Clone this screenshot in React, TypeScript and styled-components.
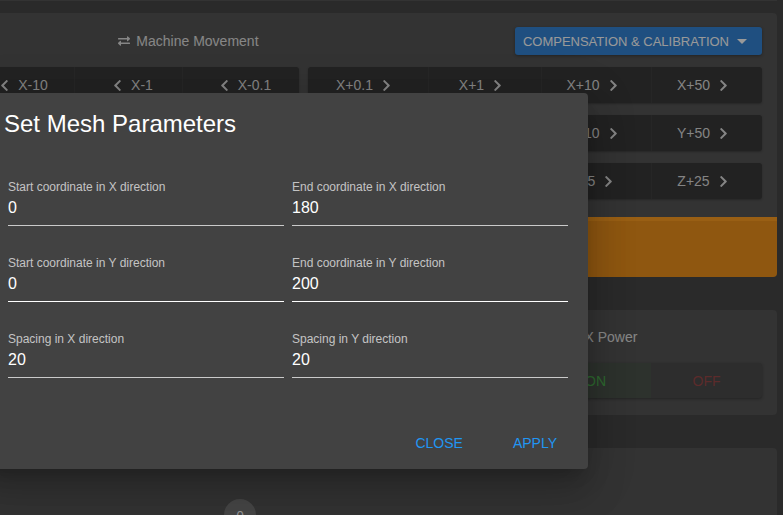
import React from "react";
import styled, { createGlobalStyle } from "styled-components";
import { FaChevronLeft, FaChevronRight, FaExchangeAlt } from "react-icons/fa";

const GlobalStyle = createGlobalStyle`
  html, body {
    margin: 0;
    padding: 0;
    background: #464646;
    overflow: hidden;
  }
  body {
    font-family: "Liberation Sans", Arial, sans-serif;
  }
  * {
    box-sizing: border-box;
  }
`;

const Viewport = styled.div`
  position: relative;
  width: 783px;
  height: 515px;
  overflow: hidden;
  background: #464646;
`;

const Page = styled.div`
  margin-left: -170px;
  width: 947px;
  display: flex;
  flex-direction: column;
  gap: 33px;
  border-top: 1px solid #555;
  padding-top: 12px;
`;

const Panel = styled.div`
  background: #555;
  border-radius: 4px;
  display: flex;
  flex-direction: column;
`;

const PanelBody = styled.div`
  display: flex;
  flex-direction: column;
  gap: 12px;
  padding: 14px 15px 18px;
`;

const Header = styled.div`
  display: flex;
  align-items: center;
  height: 28px;
`;

const HeaderTitle = styled.div`
  flex: 1;
  display: flex;
  align-items: center;
  justify-content: center;
  gap: 6px;
  padding-left: 17px;
  color: #e0e0e0;
  font-size: 14px;
`;

const DropdownButton = styled.button`
  height: 28px;
  display: flex;
  align-items: center;
  gap: 8px;
  padding: 0 15px 0 8px;
  border: none;
  border-radius: 3px;
  background: #3484d5;
  color: #fff;
  font-family: inherit;
  font-size: 13px;
  text-transform: uppercase;
  box-shadow: 0 1px 3px rgba(0, 0, 0, 0.3);
`;

const Caret = styled.span`
  width: 0;
  height: 0;
  border-left: 5px solid transparent;
  border-right: 5px solid transparent;
  border-top: 5px solid currentColor;
`;

const JogRow = styled.div`
  display: grid;
  grid-template-columns: 1fr 1fr;
  gap: 9px;
  height: 36px;
`;

const JogGroup = styled.div<{ $cols: string }>`
  display: grid;
  grid-template-columns: ${({ $cols }) => $cols};
  background: #393939;
  border-radius: 3px;
  overflow: hidden;
  box-shadow: 0 1px 2px rgba(0, 0, 0, 0.25);
`;

const JogButton = styled.button<{ $dir: "left" | "right" }>`
  display: flex;
  align-items: center;
  justify-content: center;
  gap: 7px;
  border: none;
  border-left: 1px solid rgba(255, 255, 255, 0.04);
  background: transparent;
  color: #dcdcdc;
  font-family: inherit;
  font-size: 14px;
  padding: ${({ $dir }) => ($dir === "left" ? "0 0 0 7px" : "0 7px 0 0")};

  &:first-child {
    border-left: none;
  }

  svg {
    flex-shrink: 0;
  }
`;

const OrangeBar = styled.div`
  height: 60px;
  background: #ee911c;
  border-top: 4px solid #ff9e22;
  border-radius: 0 0 4px 4px;
`;

const PowerCard = styled.div`
  background: #555;
  border-radius: 4px;
  padding: 17px 15px;
  display: grid;
  grid-template-columns: 1fr 222px;
  gap: 24px;
`;

const PowerBlock = styled.div`
  display: flex;
  flex-direction: column;
  gap: 16px;
`;

const PowerTitle = styled.div`
  padding-left: 25px;
  color: #e0e0e0;
  font-size: 14px;
  line-height: 20px;
`;

const Toggle = styled.div`
  display: grid;
  grid-template-columns: 1fr 1fr;
  height: 35px;
  background: #4b4b4b;
  border-radius: 3px;
  overflow: hidden;
  box-shadow: 0 1px 3px rgba(0, 0, 0, 0.3);
`;

const ToggleOption = styled.div<{ $kind: "on" | "off" }>`
  display: flex;
  align-items: center;
  justify-content: center;
  font-size: 14px;
  color: ${({ $kind }) => ($kind === "on" ? "#4caf50" : "#994949")};
  background: ${({ $kind }) =>
    $kind === "on" ? "rgba(76, 175, 80, 0.09)" : "transparent"};
`;

const BottomCard = styled.div`
  background: #555;
  border-radius: 4px 4px 0 0;
  min-height: 120px;
  padding: 51px 15px 0;
`;

const CountBadge = styled.div`
  width: 32px;
  height: 32px;
  margin-left: 379px;
  border-radius: 50%;
  background: #767676;
  color: #fff;
  font-size: 13px;
  display: flex;
  align-items: center;
  justify-content: center;
`;

const Scrim = styled.div`
  position: absolute;
  inset: 0;
  background: rgba(0, 0, 0, 0.4);
`;

const Dialog = styled.div`
  position: absolute;
  top: 93px;
  left: -20px;
  width: 608px;
  background: #424242;
  border-radius: 4px;
  color: #fff;
  box-shadow: 0 11px 15px -7px rgba(0, 0, 0, 0.2),
    0 24px 38px 3px rgba(0, 0, 0, 0.14), 0 9px 46px 8px rgba(0, 0, 0, 0.12);
`;

const DialogTitle = styled.h2`
  margin: 0;
  padding: 15px 24px 0;
  font-size: 24px;
  line-height: 32px;
  font-weight: 400;
`;

const DialogContent = styled.div`
  display: grid;
  grid-template-columns: 1fr 1fr;
  column-gap: 8px;
  row-gap: 29px;
  padding: 39px 20px 0 28px;
`;

const Field = styled.label`
  display: flex;
  flex-direction: column;
`;

const FieldLabel = styled.span`
  font-size: 12px;
  line-height: 16px;
  color: rgba(255, 255, 255, 0.7);
`;

const FieldInput = styled.input<{ $bright?: boolean }>`
  margin-top: 1px;
  width: 100%;
  height: 30px;
  padding: 0 0 5px;
  border: none;
  border-bottom: 1px solid
    ${({ $bright }) => ($bright ? "#fff" : "rgba(255, 255, 255, 0.72)")};
  background: transparent;
  color: #fff;
  font-family: inherit;
  font-size: 16px;
  line-height: 24px;
  outline: none;
`;

const DialogActions = styled.div`
  display: flex;
  justify-content: flex-end;
  gap: 18px;
  padding: 47px 15px 8px;
`;

const ActionButton = styled.button`
  padding: 6px 16px;
  border: none;
  background: transparent;
  color: #2196f3;
  font-family: inherit;
  font-size: 14px;
  line-height: 24px;
  text-transform: uppercase;
`;

const jogRows = [
  {
    left: ["X-50", "X-10", "X-1", "X-0.1"],
    right: ["X+0.1", "X+1", "X+10", "X+50"],
  },
  {
    left: ["Y-50", "Y-10", "Y-1", "Y-0.1"],
    right: ["Y+0.1", "Y+1", "Y+10", "Y+50"],
  },
  {
    left: ["Z-25", "Z-5", "Z-1", "Z-0.1"],
    right: ["Z+0.1", "Z+1", "Z+5", "Z+25"],
  },
];

const fields = [
  { label: "Start coordinate in X direction", value: "0" },
  { label: "End coordinate in X direction", value: "180" },
  { label: "Start coordinate in Y direction", value: "0", bright: true },
  { label: "End coordinate in Y direction", value: "200", bright: true },
  { label: "Spacing in X direction", value: "20" },
  { label: "Spacing in Y direction", value: "20" },
];

export default function App() {
  return (
    <Viewport>
      <GlobalStyle />
      <Page>
        <Panel>
          <PanelBody>
            <Header>
              <HeaderTitle>
                <FaExchangeAlt size={12} />
                Machine Movement
              </HeaderTitle>
              <DropdownButton>
                Compensation &amp; Calibration
                <Caret />
              </DropdownButton>
            </Header>

            {jogRows.map((row) => (
              <JogRow key={row.left[0]}>
                <JogGroup $cols="1fr 110px 108px 117px">
                  {row.left.map((label) => (
                    <JogButton key={label} $dir="left">
                      <FaChevronLeft size={13} />
                      {label}
                    </JogButton>
                  ))}
                </JogGroup>
                <JogGroup $cols="120px 113px 110px 1fr">
                  {row.right.map((label) => (
                    <JogButton key={label} $dir="right">
                      {label}
                      <FaChevronRight size={13} />
                    </JogButton>
                  ))}
                </JogGroup>
              </JogRow>
            ))}
          </PanelBody>
          <OrangeBar />
        </Panel>

        <PowerCard>
          <PowerBlock>
            <PowerTitle>Fan Power</PowerTitle>
            <Toggle>
              <ToggleOption $kind="on">ON</ToggleOption>
              <ToggleOption $kind="off">OFF</ToggleOption>
            </Toggle>
          </PowerBlock>
          <PowerBlock>
            <PowerTitle>AUX Power</PowerTitle>
            <Toggle>
              <ToggleOption $kind="on">ON</ToggleOption>
              <ToggleOption $kind="off">OFF</ToggleOption>
            </Toggle>
          </PowerBlock>
        </PowerCard>

        <BottomCard>
          <CountBadge>0</CountBadge>
        </BottomCard>
      </Page>

      <Scrim />

      <Dialog>
        <DialogTitle>Set Mesh Parameters</DialogTitle>
        <DialogContent>
          {fields.map((f) => (
            <Field key={f.label}>
              <FieldLabel>{f.label}</FieldLabel>
              <FieldInput defaultValue={f.value} $bright={f.bright} readOnly />
            </Field>
          ))}
        </DialogContent>
        <DialogActions>
          <ActionButton>Close</ActionButton>
          <ActionButton>Apply</ActionButton>
        </DialogActions>
      </Dialog>
    </Viewport>
  );
}
